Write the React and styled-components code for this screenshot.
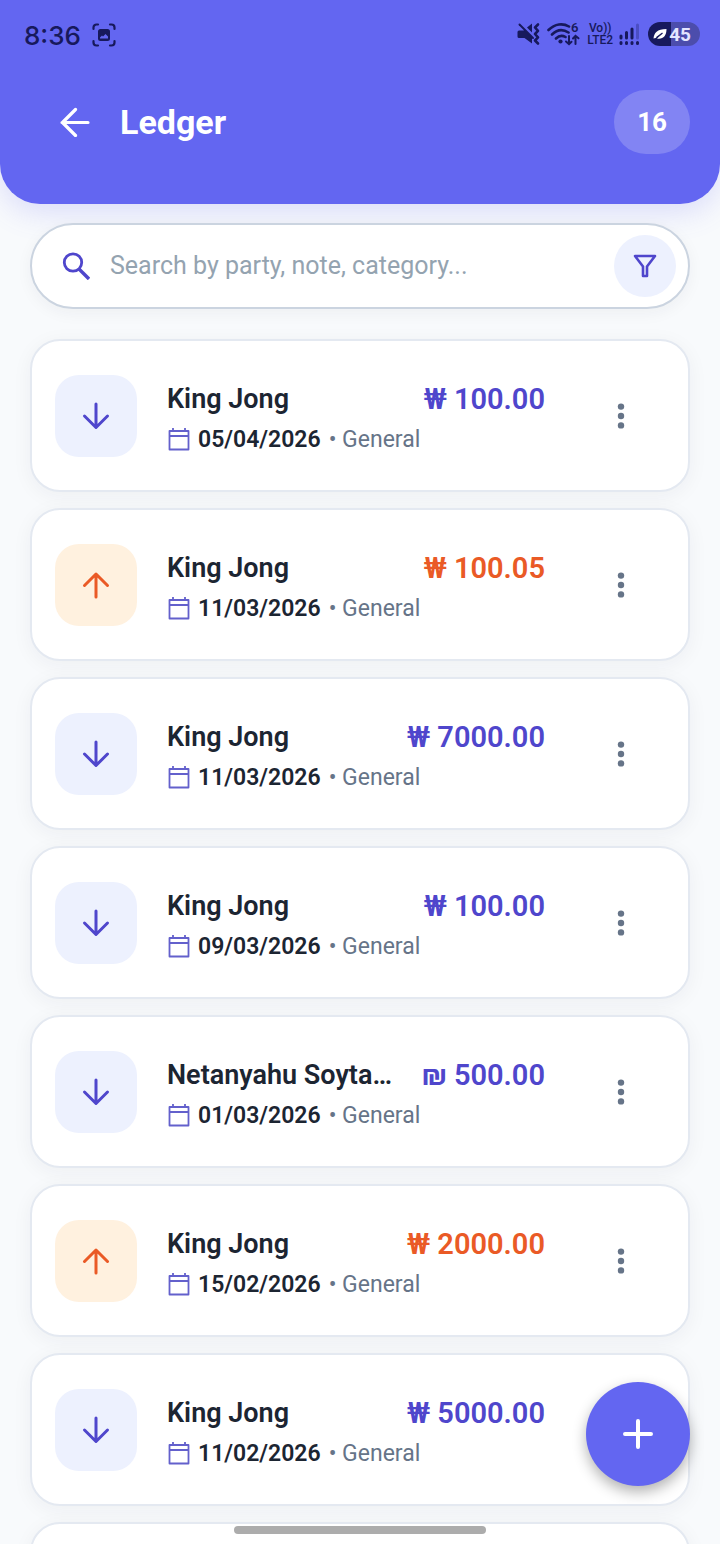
import styled, { createGlobalStyle } from "styled-components";

const palette = {
	primary: "#6366f1",
	income: "#4f46cc",
	incomeSoft: "#edf1fe",
	expense: "#ea5a26",
	expenseSoft: "#fff1df",
	calendar: "#6360cc",
	text: "#1c2532",
	muted: "#667488",
	placeholder: "#94a3b0",
	line: "#e4e9f1",
	inputLine: "#cbd4e0",
	background: "#f8fafc",
	status: "#17195c",
};

const entries = [
	{ id: 1, name: "King Jong", amount: "₩ 100.00", date: "05/04/2026", type: "in" },
	{ id: 2, name: "King Jong", amount: "₩ 100.05", date: "11/03/2026", type: "out" },
	{ id: 3, name: "King Jong", amount: "₩ 7000.00", date: "11/03/2026", type: "in" },
	{ id: 4, name: "King Jong", amount: "₩ 100.00", date: "09/03/2026", type: "in" },
	{ id: 5, name: "Netanyahu Soyta…", amount: "₪ 500.00", date: "01/03/2026", type: "in" },
	{ id: 6, name: "King Jong", amount: "₩ 2000.00", date: "15/02/2026", type: "out" },
	{ id: 7, name: "King Jong", amount: "₩ 5000.00", date: "11/02/2026", type: "in" },
];

const StatusBar = () => (
	<Status>
		<Clock>8:36</Clock>
		<svg width="24" height="24" viewBox="0 0 24 24" fill="none" stroke="currentColor" strokeWidth="2.2" strokeLinecap="round">
			<path d="M1.5 6V4.5a3 3 0 0 1 3-3H6M18 1.5h1.5a3 3 0 0 1 3 3V6M22.5 18v1.5a3 3 0 0 1-3 3H18M6 22.5H4.5a3 3 0 0 1-3-3V18" />
			<path d="M8.5 6h7A2.5 2.5 0 0 1 18 8.5v7a2.5 2.5 0 0 1-2.5 2.5h-7A2.5 2.5 0 0 1 6 15.5v-7A2.5 2.5 0 0 1 8.5 6zM8 15.5h8v-2L13.5 11 11 13.5l-1-1-2 2z" fill="currentColor" fillRule="evenodd" stroke="none" />
		</svg>
		<StatusIcons>
			<svg width="24" height="24" viewBox="0 0 24 24" fill="none" stroke="currentColor" strokeWidth="2.6" strokeLinecap="round" strokeLinejoin="round">
				<path d="M2 8.5h4.5l1.5-1L15 15v6.5L7.5 16H2a1.5 1.5 0 0 1-1.5-1.5V10A1.5 1.5 0 0 1 2 8.5zM15 1.5v9l-5-5z" fill="currentColor" stroke="none" />
				<path d="M2.5 2.5L16 16" strokeWidth="2" />
				<path d="M21 2.5l-3 3 3 3.3-3 3.2 3 3.3-3 3.2 3 3" />
			</svg>
			<svg width="34" height="30" viewBox="0 -3 34 30" fill="none" stroke="currentColor" strokeWidth="2.6" strokeLinecap="round">
				<path d="M1.5 8C8 1.5 16 1 22 4.5M5 12.5c5-5 11-5.5 16.5-2M9 16.5c3-3 6.5-3.3 9.5-1.5" />
				<circle cx="13.5" cy="19.5" r="2.1" fill="currentColor" stroke="none" />
				<path d="M22 14v8m-3-2.5l3 2.7 2.5-2.5M28.5 22v-8M26 16.5l2.5-2.7 3 2.5" strokeWidth="2" />
				<text x="24" y="10" fontSize="13" fontFamily="Roboto, sans-serif" fontWeight="600" fill="currentColor" stroke="none">6</text>
			</svg>
			<Carrier>
				<span>Vo))</span>
				<span>LTE2</span>
			</Carrier>
			<svg width="21" height="24" viewBox="0 0 21 24" stroke="currentColor" strokeWidth="3" strokeLinecap="round">
				<path d="M2 20.5v1M7.500 20.5v1M13 20.5v1M18.5 20.5v1M2 14v2M7.500 10.5V16M13 7v9" />
				<path d="M18.5 3v13" opacity="0.3" />
			</svg>
			<Battery>
				<svg width="14" height="12" viewBox="0 0 14 12">
					<path d="M0.500 10.500C1 5 4 1 13.500 1 13.500 8 10 11.500 4 10.500l6-5.500-7.500 5z" fill="#fff" />
					<path d="M3.500 9.500l6-4.500" stroke={palette.status} strokeWidth="1.2" />
				</svg>
				45
			</Battery>
		</StatusIcons>
	</Status>
);

const DirectionIcon = ({ type }) => (
	<svg width="28" height="28" viewBox="0 0 28 28" fill="none" stroke="currentColor" strokeWidth="3" strokeLinecap="round" strokeLinejoin="round">
		{type === "in" ? <path d="M14 2v23M2.5 14L14 25.5 25.5 14" /> : <path d="M14 26V3M2.5 14.5L14 3l11.5 11.5" />}
	</svg>
);

const CalendarIcon = () => (
	<svg width="23" height="26" viewBox="0 0 23 26" fill="none" stroke={palette.calendar} strokeWidth="1.8" strokeLinejoin="round">
		<path d="M2.5 4h19v18.5h-19zM2.5 9h19M6 1v3M18 1v3" />
	</svg>
);

const Entry = ({ entry }) => (
	<Card>
		<Tile $type={entry.type}>
			<DirectionIcon type={entry.type} />
		</Tile>
		<Details>
			<Line>
				<Name>{entry.name}</Name>
				<Amount $type={entry.type}>{entry.amount}</Amount>
			</Line>
			<Meta>
				<CalendarIcon />
				<time>{entry.date}</time>
				<span>• General</span>
			</Meta>
		</Details>
		<MenuButton type="button" aria-label="Entry options">
			<svg width="8" height="26" viewBox="0 0 8 26" fill="currentColor">
				<circle cx="4" cy="3.6" r="3.2" />
				<circle cx="4" cy="13" r="3.2" />
				<circle cx="4" cy="22.4" r="3.2" />
			</svg>
		</MenuButton>
	</Card>
);

const App = () => {
	return (
		<Screen>
			<GlobalStyle />
			<Header>
				<StatusBar />
				<TitleBar>
					<BackButton type="button" aria-label="Back">
						<svg width="30" height="30" viewBox="0 0 30 30" fill="none" stroke="currentColor" strokeWidth="3.2" strokeLinecap="round" strokeLinejoin="round">
							<path d="M28 15.5H2M15.5 2.5l-13 13 13 13" />
						</svg>
					</BackButton>
					<h1>Ledger</h1>
					<Count>16</Count>
				</TitleBar>
			</Header>
			<Content>
				<SearchBox>
					<svg width="28" height="28" viewBox="0 0 28 28" fill="none" stroke={palette.income} strokeWidth="2.8">
						<circle cx="11" cy="10.5" r="8.7" />
						<path d="M17 17l10 10" strokeWidth="3.4" />
					</svg>
					<input type="search" aria-label="Search entries" placeholder="Search by party, note, category..." />
					<FilterButton type="button" aria-label="Filter">
						<svg width="24" height="24" viewBox="0 0 24 24" fill="none" stroke="currentColor" strokeWidth="2.6" strokeLinejoin="round">
							<path d="M2 2h20l-8 10.5V22h-4v-9.5z" />
						</svg>
					</FilterButton>
				</SearchBox>
				<List>
					{entries.map((entry) => (
						<Entry key={entry.id} entry={entry} />
					))}
					<Card />
				</List>
			</Content>
			<AddButton type="button" aria-label="Add entry">
				<svg width="32" height="32" viewBox="0 0 32 32" fill="none" stroke="currentColor" strokeWidth="4" strokeLinecap="round">
					<path d="M16 3v26M3 16h26" />
				</svg>
			</AddButton>
			<HomeIndicator />
		</Screen>
	);
};

const GlobalStyle = createGlobalStyle`
	* {
		box-sizing: border-box;
	}

	body {
		margin: 0;
		background-color: ${palette.background};
		font-family: Roboto, "Noto Sans", sans-serif;
		color: ${palette.text};
	}

	button, input {
		font: inherit;
		border: none;
		padding: 0;
	}

	button {
		display: flex;
		align-items: center;
		justify-content: center;
		flex-shrink: 0;
		cursor: pointer;
	}

	svg {
		flex-shrink: 0;
	}
`;

const Screen = styled.div`
	display: flex;
	flex-direction: column;
	height: 100vh;
	overflow: hidden;
`;

const Header = styled.header`
	flex-shrink: 0;
	padding-bottom: 50px;
	background-color: ${palette.primary};
	border-radius: 0 0 40px 40px;
	box-shadow: 0 8px 30px rgba(99, 102, 241, 0.2);
`;

const Status = styled.div`
	display: flex;
	align-items: center;
	gap: 11px;
	height: 70px;
	padding: 0 20px 0 24px;
	color: ${palette.status};
`;

const Clock = styled.span`
	font-family: Inter, Roboto, sans-serif;
	font-size: 26px;
	font-weight: 500;
`;

const StatusIcons = styled.div`
	display: flex;
	align-items: center;
	gap: 6px;
	height: 68px;
	margin-left: auto;
	margin-bottom: 2px;
`;

const Carrier = styled.span`
	display: flex;
	flex-direction: column;
	align-items: center;
	font-size: 12px;
	font-weight: 500;
	line-height: 12px;
`;

const Battery = styled.span`
	display: flex;
	align-items: center;
	gap: 2px;
	height: 24px;
	margin-left: 2px;
	padding: 0 9px 0 5px;
	border-radius: 12px;
	background: linear-gradient(to right, ${palette.status} 45%, #4c4dac 45%);
	color: #e4e5ff;
	font-size: 19px;
	font-weight: 700;
`;

const TitleBar = styled.div`
	display: flex;
	align-items: center;
	gap: 30px;
	padding: 20px 30px 0 60px;
	color: #ffffff;

	h1 {
		flex: 1;
		margin: 0;
		font-size: 34px;
		font-weight: 700;
		line-height: 40px;
	}
`;

const BackButton = styled.button`
	background: none;
	color: inherit;
`;

const Count = styled.span`
	padding: 16px 23px;
	border-radius: 32px;
	background-color: rgba(255, 255, 255, 0.2);
	font-size: 26px;
	font-weight: 700;
	line-height: 32px;
`;

const Content = styled.main`
	flex: 1;
	min-height: 0;
	padding: 19px 30px 0;
`;

const SearchBox = styled.label`
	display: flex;
	align-items: center;
	gap: 20px;
	height: 86px;
	padding: 0 12px 0 30px;
	border: 2px solid ${palette.inputLine};
	border-radius: 43px;
	background-color: #ffffff;
	box-shadow: 0 4px 16px rgba(30, 41, 59, 0.05);

	input {
		flex: 1;
		min-width: 0;
		background: none;
		outline: none;
		font-size: 25px;
		line-height: 32px;
		color: ${palette.text};

		&::placeholder {
			color: ${palette.placeholder};
		}
	}
`;

const FilterButton = styled.button`
	width: 62px;
	height: 62px;
	border-radius: 50%;
	background-color: ${palette.incomeSoft};
	color: ${palette.income};
`;

const List = styled.ul`
	display: flex;
	flex-direction: column;
	gap: 16px;
	margin: 0;
	padding: 30px 0 0;
	list-style: none;
`;

const Card = styled.li`
	display: flex;
	align-items: center;
	min-height: 153px;
	padding: 0 19px 0 23px;
	border: 2px solid ${palette.line};
	border-radius: 30px;
	background-color: #ffffff;
	box-shadow: 0 4px 20px rgba(30, 41, 59, 0.05);
`;

const Tile = styled.div`
	display: flex;
	align-items: center;
	justify-content: center;
	flex-shrink: 0;
	width: 82px;
	height: 82px;
	border-radius: 24px;
	background-color: ${({ $type }) => ($type === "in" ? palette.incomeSoft : palette.expenseSoft)};
	color: ${({ $type }) => ($type === "in" ? palette.income : palette.expense)};
`;

const Details = styled.div`
	display: flex;
	flex-direction: column;
	gap: 10px;
	flex: 1;
	min-width: 0;
	margin-left: 30px;
	padding-top: 4px;
`;

const Line = styled.div`
	display: flex;
	justify-content: space-between;
	gap: 12px;
	line-height: 34px;
	white-space: nowrap;
`;

const Name = styled.span`
	overflow: hidden;
	text-overflow: ellipsis;
	font-size: 27px;
	font-weight: 600;
`;

const Amount = styled.span`
	font-size: 29px;
	font-weight: 600;
	color: ${({ $type }) => ($type === "in" ? palette.income : palette.expense)};
`;

const Meta = styled.div`
	display: flex;
	align-items: center;
	gap: 8px;
	font-size: 23px;
	line-height: 28px;
	color: ${palette.muted};

	time {
		font-weight: 600;
		color: ${palette.text};
	}
`;

const MenuButton = styled.button`
	width: 96px;
	height: 96px;
	margin-left: 28px;
	background: none;
	color: ${palette.muted};
`;

const AddButton = styled.button`
	position: fixed;
	right: 30px;
	bottom: 58px;
	width: 104px;
	height: 104px;
	border-radius: 50%;
	background-color: ${palette.primary};
	color: #ffffff;
	box-shadow: 0 6px 14px rgba(0, 0, 0, 0.3);
`;

const HomeIndicator = styled.div`
	position: fixed;
	bottom: 10px;
	left: 50%;
	width: 252px;
	height: 8px;
	border-radius: 4px;
	background-color: #acacac;
	transform: translateX(-50%);
`;

export default App;
